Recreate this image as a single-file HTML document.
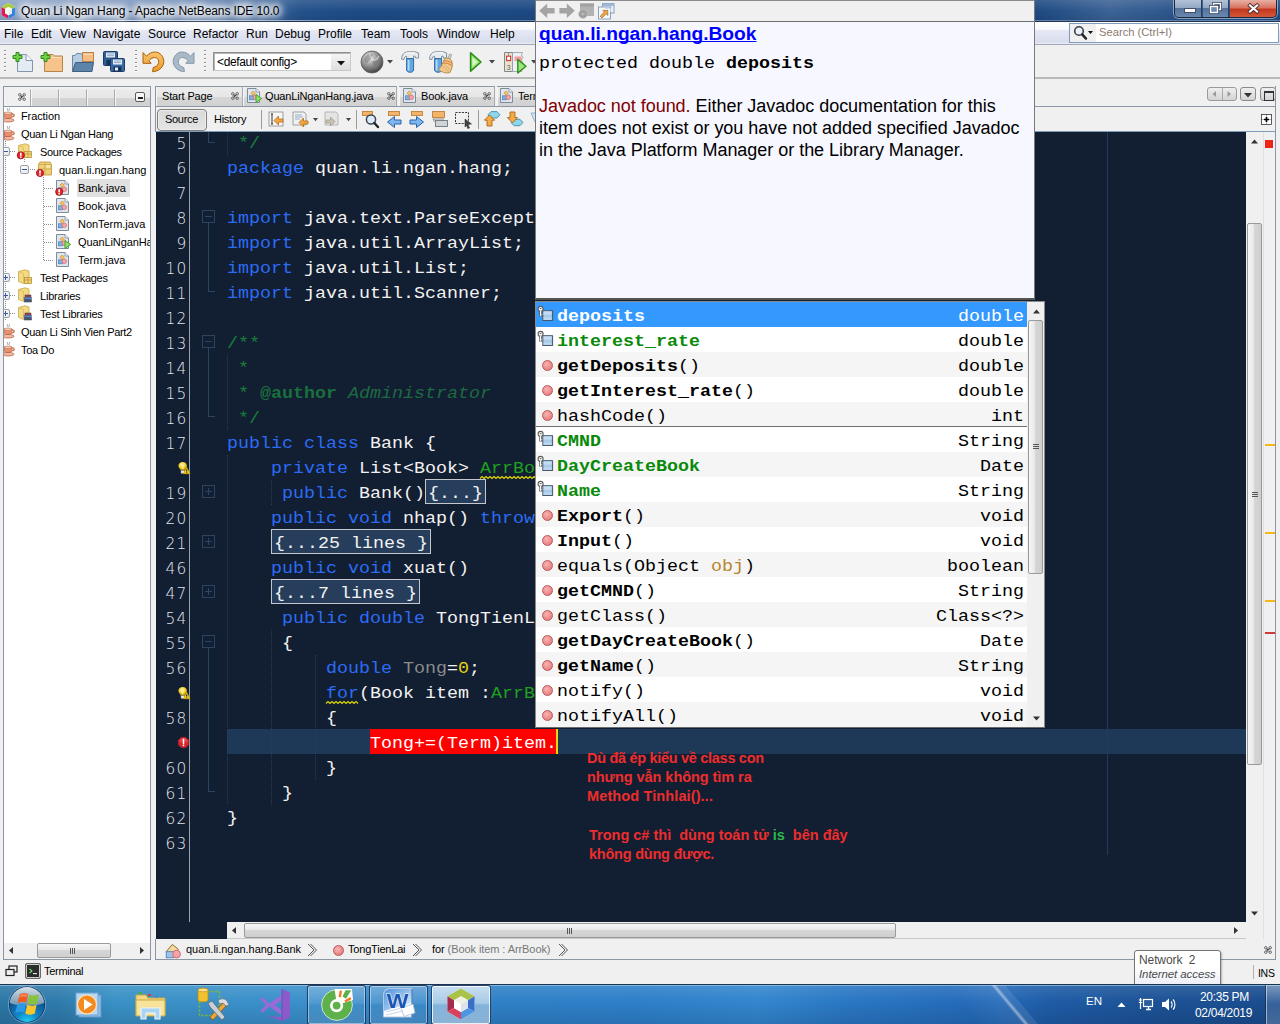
<!DOCTYPE html>
<html lang="vi">
<head>
<meta charset="utf-8">
<title>Quan Li Ngan Hang - Apache NetBeans IDE 10.0</title>
<style>
html,body{margin:0;padding:0;}
body{width:1280px;height:1024px;overflow:hidden;position:relative;background:#f0f0f0;font-family:"Liberation Sans","DejaVu Sans",sans-serif;font-size:11px;color:#000;}
.abs,.abs-all *{position:absolute;}
div,span,svg{box-sizing:border-box;}
svg{position:absolute;overflow:visible;}
.ui{font-size:11px;letter-spacing:-0.3px;white-space:nowrap;}
/* ---------- title bar ---------- */
#titlebar{left:0;top:0;width:1280px;height:22px;background:linear-gradient(90deg,#8da4c7 0px,#8aa2c6 40px,#7591bc 170px,#4e73a6 250px,#24528b 300px,#1e4b85 360px,#1c4882 900px,#1f4b83 1040px,#3c6395 1110px,#2b558c 1180px,#204e87 1280px);}
#titlebar .shade{left:0;top:0;width:1280px;height:22px;background:linear-gradient(180deg,rgba(255,255,255,.12) 0,rgba(255,255,255,0) 50%,rgba(0,0,0,.10) 100%);}
#title{left:21px;top:4px;font-size:12px;letter-spacing:-0.1px;color:#000;white-space:nowrap;text-shadow:0 0 6px #fff,0 0 6px #fff,0 0 8px #fff,0 0 10px #fff,0 0 12px #fff,0 0 12px #fff;}
/* ---------- menu bar ---------- */
#menubar{left:0;top:22px;width:1280px;height:23px;background:linear-gradient(180deg,#ffffff 0,#f8f9fd 30%,#e6e9f4 36%,#d8ddee 90%,#eceef7 100%);border-top:1px solid #fbfcfe;border-bottom:1px solid #a3a8b6;}
#menubar span{position:absolute;top:4px;font-size:12px;white-space:nowrap;}
/* ---------- toolbar ---------- */
#toolbar{left:0;top:45px;width:1280px;height:34px;background:#f0f0f0;border-bottom:2px solid #b9b9b9;}
.dots{width:2px;background-image:linear-gradient(180deg,#8e8e8e 1px,#fff 1px,#fff 2px,transparent 2px);background-size:2px 4px;}
/* ---------- left panel ---------- */
#leftpanel{left:3px;top:86px;width:148px;height:874px;border:1px solid #8b97a5;background:#fff;overflow:hidden;}
#leftpanel .hdr{left:0;top:0;width:146px;height:20px;background:#f0f0f0;border-bottom:1px solid #8b97a5;}
#leftpanel .hdr .t{top:0;height:19px;border-right:1px solid #a4abb5;box-shadow:inset 1px 0 0 #f6f6f6;background:linear-gradient(180deg,#ebebeb 0,#e6e6e6 50%,#d4d4d4 55%,#d0d0d0 100%);}
.tree div{position:absolute;height:18px;line-height:18px;font-size:11px;letter-spacing:-0.3px;white-space:nowrap;}
/* ---------- editor ---------- */
#edtabs{left:155px;top:86px;width:1121px;height:20px;border-left:1px solid #8b97a5;background:#f0f0f0;}
.etab{top:0;height:20px;border-top:1px solid #8b97a5;border-right:1px solid #a4abb5;box-shadow:inset 1px 0 0 #f6f6f6;background:linear-gradient(180deg,#ececec 0,#e7e7e7 50%,#d6d6d6 55%,#d2d2d2 100%);}
.etab span{position:absolute;top:3px;letter-spacing:-0.15px;}
#edtool{left:155px;top:106px;width:1121px;height:26px;background:#f0f0f0;border:1px solid #8b97a5;border-bottom:1px solid #7f9db9;}
#code{left:156px;top:132px;width:1090px;height:790px;background:#121e31;overflow:hidden;}
#code .row{position:absolute;left:71px;height:25px;line-height:25px;white-space:pre;color:#f2f2f2;}
.t{display:inline-block;font-family:"Liberation Mono","DejaVu Sans Mono",monospace;font-size:18.333px;line-height:25px;white-space:pre;transform:scaleY(.86);transform-origin:0 17.6px;}
#code .ln{position:absolute;left:0;width:31.5px;height:25px;text-align:right;color:#e4e7eb;}
#code .ln .t{font-family:"DejaVu Sans Light","DejaVu Sans",sans-serif;font-weight:200;font-size:15.4px;letter-spacing:1.2px;transform:none;}
.k{color:#2c6cf5;}
.c{color:#17803a;}
.c b{color:#1a6f3e;}
.c i{color:#1d6b42;}
.f{color:#1fa01f;}
.fold{position:absolute;border:1px solid #c4c8cc;background:#263e5c;height:25px;padding:0 0 0 2px;color:#f2f2f2;overflow:hidden;}
.fold .t{position:absolute;left:2px;top:1px;}
.ann{font:bold 14.5px/19px 'Liberation Sans','DejaVu Sans',sans-serif;color:#ee2d2d;white-space:pre;}
.fbox{position:absolute;left:46px;width:13px;height:13px;border:1px solid #2b4461;}
.fbox i{position:absolute;left:2px;top:5px;width:7px;height:1px;background:#2b4461;}
.fbox b{position:absolute;left:5px;top:2px;width:1px;height:7px;background:#2b4461;}
.fl{position:absolute;background:#2b4461;}
.ig{position:absolute;width:1px;background-image:linear-gradient(180deg,#2a3d57 1px,transparent 1px);background-size:1px 2px;}
/* ---------- popups ---------- */
#jdoc{left:535px;top:0;width:500px;height:300px;background:#f7f7ff;border-left:1px solid #7a7a7a;border-right:1px solid #7a7a7a;border-bottom:2px solid #555;}
#jdoc .bar{left:0;top:0;width:498px;height:22px;background:#f0f0f0;border-bottom:1px solid #6e6e6e;border-top:1px solid #8a8a8a;}
#cc{left:535px;top:301px;width:510px;height:427px;background:#fff;border:1px solid #8a8a8a;border-bottom-color:#6b6b6b;overflow:hidden;}
#cc .r{position:absolute;left:0;width:491px;height:25px;white-space:pre;color:#000;}
#cc .r.g{background:#f5f5f5;}
#cc .r .n{position:absolute;left:21px;top:2px;}
#cc .r .ty{position:absolute;right:3px;top:2px;}
#cc .r b{font-weight:bold;}
#cc .r .fi{color:#0a8a0a;font-weight:bold;}
.mi{position:absolute;left:6px;top:8px;width:11px;height:11px;border-radius:50%;background:radial-gradient(circle at 40% 35%,#f9b4b4 0,#ee8d8d 55%,#d96a6a 100%);border:1px solid #b85a5a;}
/* ---------- status / taskbar ---------- */
#statusbar{left:0;top:960px;width:1280px;height:24px;background:#f0f0f0;}
#taskbar{left:0;top:984px;width:1280px;height:40px;overflow:hidden;background:linear-gradient(90deg,#2c77a6 0px,#2f7cad 60px,#3a92c6 115px,#3b90cc 300px,#2f81c7 500px,#2e80c9 640px,#3386ce 760px,#2a77c3 850px,#2369b8 1000px,#1f5ca6 1050px,#1c5397 1150px,#1a4d8e 1280px);border-top:1px solid #1d3350;}
#taskbar .sh{left:0;top:0;width:1280px;height:39px;border-top:1px solid rgba(160,215,245,.7);background:linear-gradient(180deg,rgba(255,255,255,.10) 0,rgba(255,255,255,0) 40%,rgba(0,0,20,.12) 100%);}
.tbtn{top:0px;height:40px;width:59px;border:1px solid rgba(16,44,84,.85);border-radius:3px;background:linear-gradient(180deg,rgba(255,255,255,.22) 0,rgba(255,255,255,.12) 45%,rgba(255,255,255,.04) 50%,rgba(255,255,255,.10) 100%);box-shadow:inset 0 0 0 1px rgba(255,255,255,.42);}
.tray{color:#fff;font-size:12px;white-space:nowrap;}
</style>
</head>
<body>
<!-- ===== title bar ===== -->
<div id="titlebar" class="abs"><div class="shade abs"></div>
<div class="abs" style="left:0;top:20px;width:1280px;height:1px;background:linear-gradient(90deg,#e4ecf6 0,#c9d7ea 200px,#7f9dc6 320px,#5f82b2 420px,#5f82b2 1280px);"></div>
<div class="abs" style="left:0;top:21px;width:1280px;height:1px;background:#27364f;"></div>
<svg style="left:1px;top:2px" width="16" height="18" viewBox="0 0 16 18">
<polygon points="7.5,1 14.5,5 14.5,13 7.5,17 0.5,13 0.5,5" fill="#fff"/>
<polygon points="7.5,1 14.5,5 11,7 7.5,5 4,7 0.5,5" fill="#a9cd3c"/>
<polygon points="0.5,5 4,7 4,11.2 7.5,13.2 7.5,17 0.5,13" fill="#e0195a"/>
<polygon points="14.5,5 11,7 11,11.2 7.5,13.2 7.5,17 14.5,13" fill="#2f80d8"/>
<polygon points="7.5,5 11,7 11,11.2 7.5,13.2 4,11.2 4,7" fill="#fafcf6"/>
<polygon points="7.5,9 11,7 11,11.2 7.5,13.2" fill="#e6ebf0"/>
</svg>
<div id="title" class="abs">Quan Li Ngan Hang - Apache NetBeans IDE 10.0</div>
<!-- window buttons -->
<div class="abs" style="left:1174px;top:0;width:103px;height:18px;border:1px solid #1b2a44;border-top:none;border-radius:0 0 5px 5px;box-shadow:0 0 0 1px rgba(255,255,255,.45);overflow:hidden;">
 <div class="abs" style="left:0;top:0;width:27px;height:17px;background:linear-gradient(180deg,#b4c2d6 0,#93a8c4 45%,#56739a 50%,#6a88b0 100%);border-right:1px solid #2a3d5c;"></div>
 <div class="abs" style="left:28px;top:0;width:26px;height:17px;background:linear-gradient(180deg,#b4c2d6 0,#93a8c4 45%,#56739a 50%,#6a88b0 100%);border-right:1px solid #2a3d5c;"></div>
 <div class="abs" style="left:55px;top:0;width:48px;height:18px;background:linear-gradient(180deg,#e8b0a4 0,#d8705c 45%,#c3361e 50%,#d45c3a 100%);"></div>
 <div class="abs" style="left:10px;top:9px;width:10px;height:3px;background:#fff;border:1px solid #44506a;box-sizing:content-box;margin:-1px;"></div>
 <svg style="left:34px;top:2px" width="13" height="12" viewBox="0 0 13 12"><rect x="4.5" y="1.5" width="7" height="6" fill="none" stroke="#3b4760" stroke-width="3"/><rect x="4.5" y="1.5" width="7" height="6" fill="none" stroke="#fff" stroke-width="1.4"/><rect x="1.5" y="4.5" width="7" height="6" fill="#6c8bb6" stroke="#3b4760" stroke-width="3"/><rect x="1.5" y="4.5" width="7" height="6" fill="#6c8bb6" stroke="#fff" stroke-width="1.4"/></svg>
 <svg style="left:73px;top:4px" width="11" height="9" viewBox="0 0 11 9"><path d="M2 1.5 L9 7.5 M9 1.5 L2 7.5" stroke="#4a2a2a" stroke-width="3.8" stroke-linecap="square"/><path d="M2 1.5 L9 7.5 M9 1.5 L2 7.5" stroke="#fff" stroke-width="2.2" stroke-linecap="square"/></svg>
</div>
</div>
<!-- ===== menu bar ===== -->
<div id="menubar" class="abs">
<span style="left:4px">File</span><span style="left:31px">Edit</span><span style="left:60px">View</span><span style="left:93px">Navigate</span><span style="left:148px">Source</span><span style="left:193px">Refactor</span><span style="left:246px">Run</span><span style="left:275px">Debug</span><span style="left:318px">Profile</span><span style="left:361px">Team</span><span style="left:400px">Tools</span><span style="left:437px">Window</span><span style="left:490px">Help</span>
<!-- quick search -->
<div class="abs" style="left:1069px;top:0px;width:210px;height:20px;background:#fff;border:1px solid #7f9db9;">
 <div class="abs" style="left:0;top:0;width:26px;height:18px;background:#f0f0f0;"></div>
 <svg style="left:3px;top:1px" width="22" height="16" viewBox="0 0 22 16"><circle cx="6" cy="6" r="4.3" fill="#e9f1fb" stroke="#3a3f4a" stroke-width="1.6"/><path d="M9.2 9.4 L13 13.6" stroke="#222" stroke-width="2.4" stroke-linecap="round"/><polygon points="15,6 20,6 17.5,9" fill="#111"/></svg>
 <span style="left:29px;top:2px;font-size:11.2px;letter-spacing:0;color:#8a7a72;">Search (Ctrl+I)</span>
</div>
</div>
<!-- ===== toolbar ===== -->
<div id="toolbar" class="abs">
<div class="abs dots" style="left:4px;top:5px;height:22px;"></div>
<!-- new file -->
<svg style="left:12px;top:5px" width="22" height="22" viewBox="0 0 22 22"><path d="M5.5 4.5 H14 L20.5 10.5 V21.5 H5.5 Z" fill="#e3ebf5" stroke="#8795a8"/><path d="M14 4.5 V10.5 H20.5" fill="#f7fafd" stroke="#8795a8"/><path d="M1 5.5 H4 V2.5 H7 V5.5 H10 V8.5 H7 V11.5 H4 V8.5 H1 Z" fill="#6fd143" stroke="#2f8a1c"/></svg>
<!-- new project -->
<svg style="left:40px;top:5px" width="24" height="22" viewBox="0 0 24 22"><path d="M4.5 4.5 H13 L14.5 6 H22.5 V21.5 H4.5 Z" fill="#f6c48b" stroke="#b8834a"/><path d="M5.5 7.5 H21.5" stroke="#fbe0bd"/><path d="M1 5.5 H4 V2.5 H7 V5.5 H10 V8.5 H7 V11.5 H4 V8.5 H1 Z" fill="#6fd143" stroke="#2f8a1c"/></svg>
<!-- open project -->
<svg style="left:71px;top:5px" width="24" height="22" viewBox="0 0 24 22"><path d="M1.5 21 V5.5 H4 L5.5 3.5 H10 L11.5 5.5 H11.5 V21 Z" fill="#b8cde2" stroke="#6d87a3"/><rect x="11.5" y="2.5" width="11" height="9" fill="#f3bd83" stroke="#b8834a"/><path d="M12.5 4.5 H21.5" stroke="#fbdcb6"/><path d="M1.5 21.5 L4.5 12.5 H22.5 L21 21.5 Z" fill="#5e84aa" stroke="#3d5f82"/></svg>
<!-- save all -->
<svg style="left:102px;top:5px" width="24" height="22" viewBox="0 0 24 22"><rect x="1.5" y="1.5" width="14" height="14" rx="1" fill="#2f5c93" stroke="#1b3c66"/><rect x="4" y="2.5" width="9" height="5" fill="#dfe9f4"/><path d="M5 4 H12 M5 5.7 H12" stroke="#7e9bbc" stroke-width=".8"/><rect x="4.5" y="10" width="8" height="5" fill="#16335a"/><rect x="8.5" y="8.5" width="14" height="13" rx="1" fill="#3a6aa3" stroke="#1b3c66"/><rect x="11" y="9.5" width="9" height="5" fill="#e6eef7"/><path d="M12 11 H19 M12 12.6 H19" stroke="#7e9bbc" stroke-width=".8"/><rect x="11.5" y="16.5" width="8" height="5" fill="#16335a"/><rect x="13" y="17.5" width="3" height="3" fill="#e6eef7"/></svg>
<div class="abs dots" style="left:135px;top:5px;height:22px;"></div>
<!-- undo -->
<svg style="left:141px;top:4px" width="24" height="24" viewBox="0 0 24 24"><defs><linearGradient id="ug" x1="0" y1="0" x2="0" y2="1"><stop offset="0" stop-color="#fbc36a"/><stop offset="1" stop-color="#ee9a2a"/></linearGradient></defs><path d="M2 3.6 L2 14.3 L10.2 14.3 L7.9 11.8 C10 8.8 14 7.4 16.4 9.6 C19.2 12.4 17.4 17.4 12.2 18.5 L11.6 22.7 C17 22.5 22 19 22.8 13.4 C23.3 7.6 18.6 3 14.4 3 C10.8 3 8 4.4 5.6 7.2 Z" fill="url(#ug)" stroke="#a8600e" stroke-width="1" stroke-linejoin="round"/></svg>
<!-- redo -->
<svg style="left:172px;top:4px" width="24" height="24" viewBox="0 0 24 24"><path d="M 22.0 3.6 L 22.0 14.3 L 13.8 14.3 L 16.1 11.8 C 14.0 8.8 10.0 7.4 7.6 9.6 C 4.8 12.4 6.6 17.4 11.8 18.5 L 12.4 22.7 C 7.0 22.5 2.0 19 1.2 13.4 C 0.7 7.6 5.4 3 9.6 3 C 13.2 3 16.0 4.4 18.4 7.2 Z" fill="#a9b9c8" stroke="#8597a9" stroke-width="1" stroke-linejoin="round"/></svg>
<div class="abs dots" style="left:204px;top:5px;height:22px;"></div>
<!-- config combo -->
<div class="abs" style="left:213px;top:7px;width:138px;height:19px;border:1px solid #8e8f8f;border-right-color:#c8c8c8;border-bottom-color:#c8c8c8;background:#fff;box-shadow:inset 1px 1px 0 #b5b5b5;">
 <span class="abs ui" style="left:3px;top:2px;font-size:12px;letter-spacing:-0.35px;">&lt;default config&gt;</span>
 <div class="abs" style="left:117px;top:1px;width:19px;height:16px;background:linear-gradient(180deg,#f4f4f4,#dedede);"></div>
 <svg style="left:123px;top:8px" width="9" height="5" viewBox="0 0 9 5"><polygon points="0,0 8,0 4,4.5" fill="#111"/></svg>
</div>
<!-- globe -->
<svg style="left:360px;top:5px" width="24" height="24" viewBox="0 0 24 24"><defs><radialGradient id="gl" cx="38%" cy="30%" r="75%"><stop offset="0" stop-color="#f4f4f4"/><stop offset=".4" stop-color="#a4a4a4"/><stop offset="1" stop-color="#3c3c3c"/></radialGradient></defs><circle cx="12" cy="12" r="11" fill="url(#gl)" stroke="#5a5a5a" stroke-width=".8"/><path d="M4 9 C6 4 11 3 13 5 C11 7 12 9 10 10 C8 11 8 13 6 13 C4.6 12 4 10.5 4 9 Z M13 11 C15 9 18 9 20 11 C20 15 18 18 15 19 C14 16 12 14 13 11 Z" fill="#7a7a7a" opacity=".6"/><path d="M9 4 C12 6 10 9 13 10 C16 11 18 8 19 6" fill="none" stroke="#fff" stroke-width="1.2" opacity=".55"/></svg>
<svg style="left:387px;top:15px" width="7" height="4" viewBox="0 0 7 4"><polygon points="0,0 6,0 3,3.5" fill="#444"/></svg>
<!-- hammer -->
<svg style="left:399px;top:5px" width="22" height="24" viewBox="0 0 22 24"><path d="M2.6 9.2 C2.6 5 5 2 9 1.8 L16.4 1.8 L19.6 3 L19.6 8 L16.6 8 L16 6.2 L14.6 6.2 L14.6 8.8 H7.6 V6.4 C6.2 6 5.2 7.2 4.8 9.6 Z" fill="#e6ebf0" stroke="#76838f" stroke-width=".9" stroke-linejoin="round"/><path d="M5 5 C6 3.4 8 2.8 10 2.8 H16" stroke="#fff" stroke-width="1" fill="none"/><path d="M7.6 8.6 H14.6 V20 C14.6 23 7.6 23 7.6 20 Z" fill="#62a6e2" stroke="#2f6aa5"/><path d="M9.6 10 V20.5" stroke="#b4d8f7" stroke-width="1.8"/></svg>
<!-- clean & build -->
<svg style="left:427px;top:5px" width="28" height="25" viewBox="0 0 28 25"><path d="M2.6 9.2 C2.6 5 5 2 9 1.8 L16.4 1.8 L19.6 3 L19.6 8 L16.6 8 L16 6.2 L14.6 6.2 L14.6 8.8 H7.6 V6.4 C6.2 6 5.2 7.2 4.8 9.6 Z" fill="#e6ebf0" stroke="#76838f" stroke-width=".9" stroke-linejoin="round"/><path d="M5 5 C6 3.4 8 2.8 10 2.8 H16" stroke="#fff" stroke-width="1" fill="none"/><path d="M7.6 8.6 H14.6 V20 C14.6 23 7.6 23 7.6 20 Z" fill="#62a6e2" stroke="#2f6aa5"/><path d="M9.6 10 V20.5" stroke="#b4d8f7" stroke-width="1.8"/><path d="M22.5 4 L24.6 4.8 L22.6 10.5 L20.6 9.8 Z" fill="#d9d9d9" stroke="#8a8a8a" stroke-width=".7"/><path d="M17.5 8.5 C20 7.5 23.5 8.6 24.8 11 C26 15 25 19 23 22.5 C20 23.6 15 22.6 11.5 19.5 C14.5 16.5 16.2 12.5 17.5 8.5 Z" fill="#efc88a" stroke="#b08648" stroke-width=".9"/><path d="M16.8 11 C19.5 10.4 22.5 11.4 25 13.4 M16 13.2 C19 12.6 22.4 13.8 25.2 15.8" stroke="#d97a3a" stroke-width="1" fill="none"/><path d="M15 16 L22 21.8 M17.5 15 L23.8 20" stroke="#cfa262" stroke-width=".7"/></svg>
<!-- run -->
<svg style="left:467px;top:6px" width="17" height="22" viewBox="0 0 17 22"><path d="M3.6 1.8 L14 11 L3.6 20.2 Z" fill="#9be67a" stroke="#2b8f1a" stroke-width="1.6" stroke-linejoin="round"/><path d="M5.4 6.4 L10.8 11 L5.4 15.6 Z" fill="#d4f7c4"/></svg>
<svg style="left:489px;top:15px" width="7" height="4" viewBox="0 0 7 4"><polygon points="0,0 6,0 3,3.5" fill="#444"/></svg>
<!-- debug -->
<svg style="left:504px;top:5px" width="26" height="25" viewBox="0 0 26 25"><path d="M0.5 2.5 H8.5 V21.5 H0.5 Z" fill="#ebe3c6" stroke="#7d8896"/><path d="M8.5 2.5 H18.5 L17.4 5 L18.8 7.4 L17.4 10 L18.6 12.6 L17.4 15 L18.5 17.4 L17.6 21.5 H8.5 Z" fill="#eef0f3" stroke="#8e99a6" stroke-width=".8"/><rect x="10.5" y="6.5" width="7" height="4.6" fill="#f79a9a"/><path d="M4.5 3 V6" stroke="#7d8896" stroke-width=".8"/><rect x="2.6" y="6.2" width="4" height="4.4" fill="#fff" stroke="#cf3a3a" stroke-width="1.1"/><text x="2.4" y="19.6" font-family="Liberation Sans,sans-serif" font-size="7.5" fill="#5a6a8a">3</text><path d="M13.8 9.4 L22 16.2 L13.8 23 Z" fill="#9be67a" stroke="#2b8f1a" stroke-width="1.4" stroke-linejoin="round"/></svg>
<svg style="left:531px;top:15px" width="7" height="4" viewBox="0 0 7 4"><polygon points="0,0 6,0 3,3.5" fill="#444"/></svg>
</div>
<!-- ===== left panel (Projects) ===== -->
<div id="leftpanel" class="abs">
<div class="hdr abs">
<div class="t abs" style="left:0;width:27px;background:#f0f0f0;"></div>
<div class="t abs" style="left:27px;width:28px;"></div>
<div class="t abs" style="left:55px;width:28px;"></div>
<div class="t abs" style="left:83px;width:28px;"></div>
<div class="t abs" style="left:111px;width:35px;border-right:none;"></div>
<svg style="left:14px;top:6px" width="8" height="8" viewBox="0 0 8 8"><path d="M2.6 2.6 L5.4 5.4 M5.4 2.6 L2.6 5.4" stroke="#444" stroke-width="1.1"/><circle cx="1.8" cy="1.8" r="1.25" fill="none" stroke="#444" stroke-width=".8"/><circle cx="6.2" cy="1.8" r="1.25" fill="none" stroke="#444" stroke-width=".8"/><circle cx="1.8" cy="6.2" r="1.25" fill="none" stroke="#444" stroke-width=".8"/><circle cx="6.2" cy="6.2" r="1.25" fill="none" stroke="#444" stroke-width=".8"/></svg>
<div class="abs" style="left:131px;top:5px;width:10px;height:10px;border:1px solid #5a5a5a;border-radius:2px;background:#f6f6f6;"><i class="abs" style="left:2px;top:4px;width:5px;height:2px;background:#222"></i></div>
</div>
<div class="tree abs" style="left:0;top:0;">
<div style="left:17px;top:20px;letter-spacing:-0.1px;">Fraction</div>
<div style="left:17px;top:38px;letter-spacing:-0.3px;">Quan Li Ngan Hang</div>
<div style="left:36px;top:56px;letter-spacing:-0.3px;">Source Packages</div>
<div style="left:55px;top:74px;letter-spacing:0px;">quan.li.ngan.hang</div>
<div style="left:73px;top:92px;width:53px;background:#e1e1e1;"></div>
<div style="left:74px;top:92px;letter-spacing:-0.05px;">Bank.java</div>
<div style="left:74px;top:110px;letter-spacing:-0.05px;">Book.java</div>
<div style="left:74px;top:128px;letter-spacing:-0.05px;">NonTerm.java</div>
<div style="left:74px;top:146px;letter-spacing:-0.1px;">QuanLiNganHa</div>
<div style="left:74px;top:164px;letter-spacing:-0.05px;">Term.java</div>
<div style="left:36px;top:182px;letter-spacing:-0.3px;">Test Packages</div>
<div style="left:36px;top:200px;letter-spacing:-0.2px;">Libraries</div>
<div style="left:36px;top:218px;letter-spacing:-0.2px;">Test Libraries</div>
<div style="left:17px;top:236px;letter-spacing:-0.3px;">Quan Li Sinh Vien Part2</div>
<div style="left:17px;top:254px;letter-spacing:-0.3px;">Toa Do</div>
</div>
<svg style="left:-2px;top:21px" width="14" height="16" viewBox="0 0 14 16"><path d="M5 0 L6 3 M7.5 0 L7 3" stroke="#8a8a8a" stroke-width=".7"/><path d="M2 5 H10 C10 9 9 11 6 11 C3 11 2 9 2 5 Z" fill="#e8926f" stroke="#b2583a" stroke-width=".8"/><path d="M10 6 C13 5.5 13 9 9.6 9" fill="none" stroke="#c8694a" stroke-width="1.2"/><ellipse cx="6" cy="5.2" rx="4" ry="1.2" fill="#f7d2c0" stroke="#b2583a" stroke-width=".5"/><ellipse cx="6" cy="12.2" rx="6" ry="1.8" fill="#f0b9a2" stroke="#b2583a" stroke-width=".7"/></svg>
<svg style="left:-2px;top:39px" width="14" height="16" viewBox="0 0 14 16"><path d="M5 0 L6 3 M7.5 0 L7 3" stroke="#8a8a8a" stroke-width=".7"/><path d="M2 5 H10 C10 9 9 11 6 11 C3 11 2 9 2 5 Z" fill="#e8926f" stroke="#b2583a" stroke-width=".8"/><path d="M10 6 C13 5.5 13 9 9.6 9" fill="none" stroke="#c8694a" stroke-width="1.2"/><ellipse cx="6" cy="5.2" rx="4" ry="1.2" fill="#f7d2c0" stroke="#b2583a" stroke-width=".5"/><ellipse cx="6" cy="12.2" rx="6" ry="1.8" fill="#f0b9a2" stroke="#b2583a" stroke-width=".7"/><rect x=0 y=7 width=2.5 height=6 fill=#e2262b /></svg>
<svg style="left:-2px;top:237px" width="14" height="16" viewBox="0 0 14 16"><path d="M5 0 L6 3 M7.5 0 L7 3" stroke="#8a8a8a" stroke-width=".7"/><path d="M2 5 H10 C10 9 9 11 6 11 C3 11 2 9 2 5 Z" fill="#e8926f" stroke="#b2583a" stroke-width=".8"/><path d="M10 6 C13 5.5 13 9 9.6 9" fill="none" stroke="#c8694a" stroke-width="1.2"/><ellipse cx="6" cy="5.2" rx="4" ry="1.2" fill="#f7d2c0" stroke="#b2583a" stroke-width=".5"/><ellipse cx="6" cy="12.2" rx="6" ry="1.8" fill="#f0b9a2" stroke="#b2583a" stroke-width=".7"/></svg>
<svg style="left:-2px;top:255px" width="14" height="16" viewBox="0 0 14 16"><path d="M5 0 L6 3 M7.5 0 L7 3" stroke="#8a8a8a" stroke-width=".7"/><path d="M2 5 H10 C10 9 9 11 6 11 C3 11 2 9 2 5 Z" fill="#e8926f" stroke="#b2583a" stroke-width=".8"/><path d="M10 6 C13 5.5 13 9 9.6 9" fill="none" stroke="#c8694a" stroke-width="1.2"/><ellipse cx="6" cy="5.2" rx="4" ry="1.2" fill="#f7d2c0" stroke="#b2583a" stroke-width=".5"/><ellipse cx="6" cy="12.2" rx="6" ry="1.8" fill="#f0b9a2" stroke="#b2583a" stroke-width=".7"/></svg>
<svg style="left:13px;top:56px" width="17" height="17" viewBox="0 0 17 17"><path d="M1.5 2.5 L8 0.8 L12 2 V11.5 L6.5 14.5 L1.5 12.5 Z" fill="#f3d982" stroke="#c9a84b" stroke-width=".8"/><path d="M1.5 2.5 L6.5 4.5 V14.5" fill="none" stroke="#d8ba5e" stroke-width=".8"/><rect x="7.5" y="8.5" width="7" height="6" fill="#f0d174" stroke="#b7943a" stroke-width=".8"/><path d="M7.5 11 H14.5 M11 8.5 V14.5" stroke="#b7943a" stroke-width=".7"/><circle cx="3.8" cy="12.3" r="3.6" fill="#e2262b" stroke="#9c1216" stroke-width=".8"/><rect x="3.0" y="9.700000000000001" width="1.6" height="3.2" fill="#fff"/><rect x="3.0" y="13.5" width="1.6" height="1.4" fill="#fff"/></svg>
<svg style="left:32px;top:74px" width="17" height="17" viewBox="0 0 17 17"><path d="M2.5 3.5 L4 1 H14 L15.5 3.5 V14 H2.5 Z" fill="#f0cf78" stroke="#b7943a" stroke-width=".8"/><path d="M2.5 3.5 H15.5 M9 1 V14 M2.5 8 H15.5" stroke="#c9a84b" stroke-width=".8"/><rect x="10.5" y="4.5" width="3" height="2" fill="#faf0cc"/><circle cx="4" cy="12" r="3.6" fill="#e2262b" stroke="#9c1216" stroke-width=".8"/><rect x="3.2" y="9.4" width="1.6" height="3.2" fill="#fff"/><rect x="3.2" y="13.2" width="1.6" height="1.4" fill="#fff"/></svg>
<svg style="left:52px;top:93px" width="15" height="16" viewBox="0 0 15 16"><path d="M0.5 0.5 H9 L12.5 4 V14.5 H0.5 Z" fill="#dfe6ee" stroke="#7f8b99"/><path d="M9 0.5 V4 H12.5" fill="#f4f7fa" stroke="#7f8b99" stroke-width=".8"/><rect x="2.6" y="7.8" width="4" height="4" fill="#7fb0e0" stroke="#4a7fb5" stroke-width=".7"/><circle cx="8.3" cy="9.3" r="2.3" fill="#f4a3a6" stroke="#cf6b70" stroke-width=".7"/><path d="M6.2 3 L8.4 5.2 L6.2 7.4 L4 5.2 Z" fill="#f5c46a" stroke="#c98a2b" stroke-width=".7"/><circle cx="3.2" cy="11.8" r="3.6" fill="#e2262b" stroke="#9c1216" stroke-width=".8"/><rect x="2.4000000000000004" y="9.200000000000001" width="1.6" height="3.2" fill="#fff"/><rect x="2.4000000000000004" y="13.0" width="1.6" height="1.4" fill="#fff"/></svg>
<svg style="left:52px;top:111px" width="15" height="16" viewBox="0 0 15 16"><path d="M0.5 0.5 H9 L12.5 4 V14.5 H0.5 Z" fill="#dfe6ee" stroke="#7f8b99"/><path d="M9 0.5 V4 H12.5" fill="#f4f7fa" stroke="#7f8b99" stroke-width=".8"/><rect x="2.6" y="7.8" width="4" height="4" fill="#7fb0e0" stroke="#4a7fb5" stroke-width=".7"/><circle cx="8.3" cy="9.3" r="2.3" fill="#f4a3a6" stroke="#cf6b70" stroke-width=".7"/><path d="M6.2 3 L8.4 5.2 L6.2 7.4 L4 5.2 Z" fill="#f5c46a" stroke="#c98a2b" stroke-width=".7"/></svg>
<svg style="left:52px;top:129px" width="15" height="16" viewBox="0 0 15 16"><path d="M0.5 0.5 H9 L12.5 4 V14.5 H0.5 Z" fill="#dfe6ee" stroke="#7f8b99"/><path d="M9 0.5 V4 H12.5" fill="#f4f7fa" stroke="#7f8b99" stroke-width=".8"/><rect x="2.6" y="7.8" width="4" height="4" fill="#7fb0e0" stroke="#4a7fb5" stroke-width=".7"/><circle cx="8.3" cy="9.3" r="2.3" fill="#f4a3a6" stroke="#cf6b70" stroke-width=".7"/><path d="M6.2 3 L8.4 5.2 L6.2 7.4 L4 5.2 Z" fill="#f5c46a" stroke="#c98a2b" stroke-width=".7"/></svg>
<svg style="left:52px;top:147px" width="15" height="16" viewBox="0 0 15 16"><path d="M0.5 0.5 H9 L12.5 4 V14.5 H0.5 Z" fill="#dfe6ee" stroke="#7f8b99"/><path d="M9 0.5 V4 H12.5" fill="#f4f7fa" stroke="#7f8b99" stroke-width=".8"/><rect x="2.6" y="7.8" width="4" height="4" fill="#7fb0e0" stroke="#4a7fb5" stroke-width=".7"/><circle cx="8.3" cy="9.3" r="2.3" fill="#f4a3a6" stroke="#cf6b70" stroke-width=".7"/><path d="M6.2 3 L8.4 5.2 L6.2 7.4 L4 5.2 Z" fill="#f5c46a" stroke="#c98a2b" stroke-width=".7"/><path d="M9 6.5 L14.6 10.5 L9 14.5 Z" fill="#8fe36a" stroke="#3a9a22" stroke-width=".9" stroke-linejoin="round"/></svg>
<svg style="left:52px;top:165px" width="15" height="16" viewBox="0 0 15 16"><path d="M0.5 0.5 H9 L12.5 4 V14.5 H0.5 Z" fill="#dfe6ee" stroke="#7f8b99"/><path d="M9 0.5 V4 H12.5" fill="#f4f7fa" stroke="#7f8b99" stroke-width=".8"/><rect x="2.6" y="7.8" width="4" height="4" fill="#7fb0e0" stroke="#4a7fb5" stroke-width=".7"/><circle cx="8.3" cy="9.3" r="2.3" fill="#f4a3a6" stroke="#cf6b70" stroke-width=".7"/><path d="M6.2 3 L8.4 5.2 L6.2 7.4 L4 5.2 Z" fill="#f5c46a" stroke="#c98a2b" stroke-width=".7"/></svg>
<svg style="left:13px;top:182px" width="17" height="17" viewBox="0 0 17 17"><path d="M1.5 2.5 L8 0.8 L12 2 V11.5 L6.5 14.5 L1.5 12.5 Z" fill="#f3d982" stroke="#c9a84b" stroke-width=".8"/><path d="M1.5 2.5 L6.5 4.5 V14.5" fill="none" stroke="#d8ba5e" stroke-width=".8"/><rect x="7.5" y="8.5" width="7" height="6" fill="#f0d174" stroke="#b7943a" stroke-width=".8"/><path d="M7.5 11 H14.5 M11 8.5 V14.5" stroke="#b7943a" stroke-width=".7"/></svg>
<svg style="left:13px;top:200px" width="17" height="17" viewBox="0 0 17 17"><path d="M1.5 2.5 L8 0.8 L12 2 V11.5 L6.5 14.5 L1.5 12.5 Z" fill="#f3d982" stroke="#c9a84b" stroke-width=".8"/><path d="M1.5 2.5 L6.5 4.5 V14.5" fill="none" stroke="#d8ba5e" stroke-width=".8"/><rect x="8" y="8" width="6" height="2.2" fill="#8a4a57" stroke="#5a2a35" stroke-width=".5"/><rect x="7" y="10.4" width="7.5" height="2.2" fill="#5f86c4" stroke="#34568f" stroke-width=".5"/><rect x="7.5" y="12.8" width="7" height="2.2" fill="#4a5a7a" stroke="#2a3450" stroke-width=".5"/></svg>
<svg style="left:13px;top:218px" width="17" height="17" viewBox="0 0 17 17"><path d="M1.5 2.5 L8 0.8 L12 2 V11.5 L6.5 14.5 L1.5 12.5 Z" fill="#f3d982" stroke="#c9a84b" stroke-width=".8"/><path d="M1.5 2.5 L6.5 4.5 V14.5" fill="none" stroke="#d8ba5e" stroke-width=".8"/><rect x="8" y="8" width="6" height="2.2" fill="#8a4a57" stroke="#5a2a35" stroke-width=".5"/><rect x="7" y="10.4" width="7.5" height="2.2" fill="#5f86c4" stroke="#34568f" stroke-width=".5"/><rect x="7.5" y="12.8" width="7" height="2.2" fill="#4a5a7a" stroke="#2a3450" stroke-width=".5"/></svg>
<div class="abs" style="left:1px;top:54px;width:1px;height:180px;background-image:linear-gradient(180deg,#8a8a8a 1px,transparent 1px);background-size:1px 2px;"></div>
<div class="abs" style="left:-3px;top:60px;width:9px;height:9px;border:1px solid #9aa0a8;border-radius:2px;background:linear-gradient(135deg,#fff,#e4e6ea);"><i class="abs" style="left:1px;top:3px;width:5px;height:1px;background:#3a55a5"></i></div>
<div class="abs" style="left:6px;top:64px;width:6px;height:1px;background-image:linear-gradient(90deg,#8a8a8a 1px,transparent 1px);background-size:2px 1px;"></div>
<div class="abs" style="left:20px;top:72px;width:1px;height:4px;background-image:linear-gradient(180deg,#8a8a8a 1px,transparent 1px);background-size:1px 2px;"></div>
<div class="abs" style="left:16px;top:78px;width:9px;height:9px;border:1px solid #9aa0a8;border-radius:2px;background:linear-gradient(135deg,#fff,#e4e6ea);"><i class="abs" style="left:1px;top:3px;width:5px;height:1px;background:#3a55a5"></i></div>
<div class="abs" style="left:26px;top:82px;width:6px;height:1px;background-image:linear-gradient(90deg,#8a8a8a 1px,transparent 1px);background-size:2px 1px;"></div>
<div class="abs" style="left:39px;top:90px;width:1px;height:84px;background-image:linear-gradient(180deg,#8a8a8a 1px,transparent 1px);background-size:1px 2px;"></div>
<div class="abs" style="left:40px;top:101px;width:9px;height:1px;background-image:linear-gradient(90deg,#8a8a8a 1px,transparent 1px);background-size:2px 1px;"></div>
<div class="abs" style="left:40px;top:119px;width:9px;height:1px;background-image:linear-gradient(90deg,#8a8a8a 1px,transparent 1px);background-size:2px 1px;"></div>
<div class="abs" style="left:40px;top:137px;width:9px;height:1px;background-image:linear-gradient(90deg,#8a8a8a 1px,transparent 1px);background-size:2px 1px;"></div>
<div class="abs" style="left:40px;top:155px;width:9px;height:1px;background-image:linear-gradient(90deg,#8a8a8a 1px,transparent 1px);background-size:2px 1px;"></div>
<div class="abs" style="left:40px;top:173px;width:9px;height:1px;background-image:linear-gradient(90deg,#8a8a8a 1px,transparent 1px);background-size:2px 1px;"></div>
<div class="abs" style="left:-3px;top:186px;width:9px;height:9px;border:1px solid #9aa0a8;border-radius:2px;background:linear-gradient(135deg,#fff,#e4e6ea);"><i class="abs" style="left:1px;top:3px;width:5px;height:1px;background:#3a55a5"></i><i class=abs style=left:3px;top:1px;width:1px;height:5px;background:#3a55a5></i></div>
<div class="abs" style="left:6px;top:190px;width:6px;height:1px;background-image:linear-gradient(90deg,#8a8a8a 1px,transparent 1px);background-size:2px 1px;"></div>
<div class="abs" style="left:-3px;top:204px;width:9px;height:9px;border:1px solid #9aa0a8;border-radius:2px;background:linear-gradient(135deg,#fff,#e4e6ea);"><i class="abs" style="left:1px;top:3px;width:5px;height:1px;background:#3a55a5"></i><i class=abs style=left:3px;top:1px;width:1px;height:5px;background:#3a55a5></i></div>
<div class="abs" style="left:6px;top:208px;width:6px;height:1px;background-image:linear-gradient(90deg,#8a8a8a 1px,transparent 1px);background-size:2px 1px;"></div>
<div class="abs" style="left:-3px;top:222px;width:9px;height:9px;border:1px solid #9aa0a8;border-radius:2px;background:linear-gradient(135deg,#fff,#e4e6ea);"><i class="abs" style="left:1px;top:3px;width:5px;height:1px;background:#3a55a5"></i><i class=abs style=left:3px;top:1px;width:1px;height:5px;background:#3a55a5></i></div>
<div class="abs" style="left:6px;top:226px;width:6px;height:1px;background-image:linear-gradient(90deg,#8a8a8a 1px,transparent 1px);background-size:2px 1px;"></div>
<div class="abs" style="left:0;top:856px;width:146px;height:16px;background:#f0f0f0;">
<svg style="left:5px;top:4px" width="5" height="8" viewBox="0 0 5 8"><polygon points="4,0 4,7 0,3.5" fill="#333"/></svg>
<svg style="left:136px;top:4px" width="5" height="8" viewBox="0 0 5 8"><polygon points="0,0 0,7 4,3.5" fill="#333"/></svg>
<div class="abs" style="left:33px;top:0px;width:74px;height:15px;border:1px solid #9a9a9a;border-radius:2px;background:linear-gradient(180deg,#f6f6f6 0,#e8e8e8 45%,#d6d6d6 50%,#cfcfcf 100%);"><i class="abs" style="left:32px;top:4px;width:1px;height:6px;background:#555"></i><i class="abs" style="left:34px;top:4px;width:1px;height:6px;background:#555"></i><i class="abs" style="left:36px;top:4px;width:1px;height:6px;background:#555"></i></div>
</div>
</div>
<!-- ===== editor tabs ===== -->
<div id="edtabs" class="abs">
<div class="etab abs ui" style="left:0;width:87px;"><span style="left:6px;">Start Page</span></div>
<svg style="left:75px;top:6px" width="8" height="8" viewBox="0 0 8 8"><path d="M2.6 2.6 L5.4 5.4 M5.4 2.6 L2.6 5.4" stroke="#444" stroke-width="1.1"/><circle cx="1.8" cy="1.8" r="1.25" fill="none" stroke="#444" stroke-width=".8"/><circle cx="6.2" cy="1.8" r="1.25" fill="none" stroke="#444" stroke-width=".8"/><circle cx="1.8" cy="6.2" r="1.25" fill="none" stroke="#444" stroke-width=".8"/><circle cx="6.2" cy="6.2" r="1.25" fill="none" stroke="#444" stroke-width=".8"/></svg>
<div class="etab abs ui" style="left:87px;width:154px;"><span style="left:22px;">QuanLiNganHang.java</span></div>
<svg style="left:91px;top:2px" width="15" height="16" viewBox="0 0 15 16"><path d="M0.5 0.5 H9 L12.5 4 V14.5 H0.5 Z" fill="#dfe6ee" stroke="#7f8b99"/><path d="M9 0.5 V4 H12.5" fill="#f4f7fa" stroke="#7f8b99" stroke-width=".8"/><rect x="2.6" y="7.8" width="4" height="4" fill="#7fb0e0" stroke="#4a7fb5" stroke-width=".7"/><circle cx="8.3" cy="9.3" r="2.3" fill="#f4a3a6" stroke="#cf6b70" stroke-width=".7"/><path d="M6.2 3 L8.4 5.2 L6.2 7.4 L4 5.2 Z" fill="#f5c46a" stroke="#c98a2b" stroke-width=".7"/><path d="M9 6.5 L14.6 10.5 L9 14.5 Z" fill="#8fe36a" stroke="#3a9a22" stroke-width=".9" stroke-linejoin="round"/></svg>
<svg style="left:231px;top:6px" width="8" height="8" viewBox="0 0 8 8"><path d="M2.6 2.6 L5.4 5.4 M5.4 2.6 L2.6 5.4" stroke="#444" stroke-width="1.1"/><circle cx="1.8" cy="1.8" r="1.25" fill="none" stroke="#444" stroke-width=".8"/><circle cx="6.2" cy="1.8" r="1.25" fill="none" stroke="#444" stroke-width=".8"/><circle cx="1.8" cy="6.2" r="1.25" fill="none" stroke="#444" stroke-width=".8"/><circle cx="6.2" cy="6.2" r="1.25" fill="none" stroke="#444" stroke-width=".8"/></svg>
<div class="etab abs ui" style="left:243px;width:96px;"><span style="left:22px;">Book.java</span></div>
<svg style="left:247px;top:2px" width="15" height="16" viewBox="0 0 15 16"><path d="M0.5 0.5 H9 L12.5 4 V14.5 H0.5 Z" fill="#dfe6ee" stroke="#7f8b99"/><path d="M9 0.5 V4 H12.5" fill="#f4f7fa" stroke="#7f8b99" stroke-width=".8"/><rect x="2.6" y="7.8" width="4" height="4" fill="#7fb0e0" stroke="#4a7fb5" stroke-width=".7"/><circle cx="8.3" cy="9.3" r="2.3" fill="#f4a3a6" stroke="#cf6b70" stroke-width=".7"/><path d="M6.2 3 L8.4 5.2 L6.2 7.4 L4 5.2 Z" fill="#f5c46a" stroke="#c98a2b" stroke-width=".7"/></svg>
<svg style="left:327px;top:6px" width="8" height="8" viewBox="0 0 8 8"><path d="M2.6 2.6 L5.4 5.4 M5.4 2.6 L2.6 5.4" stroke="#444" stroke-width="1.1"/><circle cx="1.8" cy="1.8" r="1.25" fill="none" stroke="#444" stroke-width=".8"/><circle cx="6.2" cy="1.8" r="1.25" fill="none" stroke="#444" stroke-width=".8"/><circle cx="1.8" cy="6.2" r="1.25" fill="none" stroke="#444" stroke-width=".8"/><circle cx="6.2" cy="6.2" r="1.25" fill="none" stroke="#444" stroke-width=".8"/></svg>
<div class="etab abs ui" style="left:341px;width:96px;"><span style="left:21px;">Term.java</span></div>
<svg style="left:344px;top:2px" width="15" height="16" viewBox="0 0 15 16"><path d="M0.5 0.5 H9 L12.5 4 V14.5 H0.5 Z" fill="#dfe6ee" stroke="#7f8b99"/><path d="M9 0.5 V4 H12.5" fill="#f4f7fa" stroke="#7f8b99" stroke-width=".8"/><rect x="2.6" y="7.8" width="4" height="4" fill="#7fb0e0" stroke="#4a7fb5" stroke-width=".7"/><circle cx="8.3" cy="9.3" r="2.3" fill="#f4a3a6" stroke="#cf6b70" stroke-width=".7"/><path d="M6.2 3 L8.4 5.2 L6.2 7.4 L4 5.2 Z" fill="#f5c46a" stroke="#c98a2b" stroke-width=".7"/></svg>
<div class="abs" style="left:1051px;top:1px;width:30px;height:14px;border:1px solid #9a9a9a;border-radius:3px;background:linear-gradient(180deg,#eee,#d4d4d4);"><i class="abs" style="left:14px;top:0;width:1px;height:12px;background:#aaa"></i><svg style="left:4px;top:3px" width="5" height="7" viewBox="0 0 5 7"><polygon points="4,0 4,6 0.5,3" fill="#9a9a9a"/></svg><svg style="left:19px;top:3px" width="5" height="7" viewBox="0 0 5 7"><polygon points="0.5,0 0.5,6 4,3" fill="#9a9a9a"/></svg></div>
<div class="abs" style="left:1084px;top:1px;width:16px;height:14px;border:1px solid #8a8a8a;border-radius:3px;background:linear-gradient(180deg,#eee,#d4d4d4);"><svg style="left:3px;top:5px" width="8" height="5" viewBox="0 0 8 5"><polygon points="0,0 8,0 4,4.5" fill="#333"/></svg></div>
<div class="abs" style="left:1104px;top:1px;width:16px;height:14px;border:1px solid #8a8a8a;border-radius:3px;background:linear-gradient(180deg,#eee,#d4d4d4);"><i class="abs" style="left:3px;top:3px;width:8px;height:7px;border:1px solid #333;border-top:2px solid #333;"></i></div>
</div>
<!-- ===== editor toolbar ===== -->
<div id="edtool" class="abs">
<div class="abs ui" style="left:1px;top:2px;width:50px;height:22px;border:1px solid #7d7d7d;border-radius:4px;background:linear-gradient(180deg,#d9d9d9,#e4e4e4);box-shadow:inset 0 0 0 1px #efefef;"><span class="abs" style="left:7px;top:3px;">Source</span></div>
<span class="abs ui" style="left:58px;top:6px;">History</span>
<i class="abs" style="left:105px;top:3px;width:1px;height:19px;background:#9a9a9a"></i>
<svg style="left:112px;top:4px" width="17" height="17" viewBox="0 0 17 17"><rect x="1" y="1" width="14" height="14" fill="#f6f6f6" stroke="#8a8a8a" stroke-width=".8"/><path d="M3 3 H5 M4 3 V13 M3 13 H5" stroke="#333" stroke-width="1"/><path d="M15 8 H10.5 V5 L6 9.5 L10.5 14 V11 H15 Z" fill="#f3a641" stroke="#b56d13" stroke-width=".8" stroke-linejoin="round"/></svg>
<svg style="left:136px;top:4px" width="17" height="17" viewBox="0 0 17 17"><path d="M1 1 H12 L14 3 V14 H1 Z" fill="#eef2f6" stroke="#8a8a8a" stroke-width=".8"/><path d="M3 4 H10 M3 6 H11 M3 8 H8" stroke="#8aa0b8" stroke-width=".8"/><path d="M16 10 H11.5 V7 L7 11.5 L11.5 16 V13 H16 Z" fill="#f3a641" stroke="#b56d13" stroke-width=".8" stroke-linejoin="round"/></svg>
<svg style="left:157px;top:11px" width="6" height="4" viewBox="0 0 6 4"><polygon points="0,0 5,0 2.5,3.2" fill="#444"/></svg>
<svg style="left:168px;top:4px" width="17" height="17" viewBox="0 0 17 17"><path d="M1 1 H12 L14 3 V14 H1 Z" fill="#e4e4e4" stroke="#aaa" stroke-width=".8"/><path d="M2 9 H6.5 V6 L11 10.5 L6.5 15 V12 H2 Z" fill="#c8c2b6" stroke="#a39c8e" stroke-width=".8" stroke-linejoin="round"/></svg>
<svg style="left:190px;top:11px" width="6" height="4" viewBox="0 0 6 4"><polygon points="0,0 5,0 2.5,3.2" fill="#444"/></svg>
<i class="abs" style="left:200px;top:3px;width:1px;height:19px;background:#9a9a9a"></i>
<svg style="left:206px;top:4px" width="18" height="18" viewBox="0 0 18 18"><rect x="0.5" y="0.5" width="10" height="4" fill="#f3b46a" stroke="#b8782b" stroke-width=".8"/><circle cx="9" cy="8.5" r="4.6" fill="#dcecf9" stroke="#3d4654" stroke-width="1.5"/><path d="M12.3 12 L16 16" stroke="#222" stroke-width="2.4" stroke-linecap="round"/></svg>
<svg style="left:229px;top:4px" width="18" height="18" viewBox="0 0 18 18"><rect x="3.5" y="0.5" width="11" height="4" fill="#f3b46a" stroke="#b8782b" stroke-width=".8"/><path d="M16 9 H9.5 V5.5 L2.5 11 L9.5 16.5 V13 H16 Z" fill="#7db6f0" stroke="#2b63a8" stroke-width="1" stroke-linejoin="round"/></svg>
<svg style="left:252px;top:4px" width="18" height="18" viewBox="0 0 18 18"><rect x="3.5" y="0.5" width="11" height="4" fill="#f3b46a" stroke="#b8782b" stroke-width=".8"/><path d="M2 9 H8.5 V5.5 L15.5 11 L8.5 16.5 V13 H2 Z" fill="#7db6f0" stroke="#2b63a8" stroke-width="1" stroke-linejoin="round"/></svg>
<svg style="left:275px;top:4px" width="18" height="18" viewBox="0 0 18 18"><rect x="1.5" y="0.5" width="12" height="6" fill="#f3b46a" stroke="#b8782b" stroke-width=".8"/><path d="M2 8 L3.5 11 M2 8 H13" stroke="#777" stroke-width=".8"/><rect x="4.5" y="9.5" width="12" height="6" fill="#d0d4d8" stroke="#6f767e" stroke-width=".9"/></svg>
<svg style="left:298px;top:4px" width="19" height="18" viewBox="0 0 19 18"><rect x="1.5" y="1.5" width="13" height="11" fill="none" stroke="#333" stroke-width="1" stroke-dasharray="2 1.2"/><path d="M11 8 L17.5 13 L14 13.5 L15.5 17 L13.8 17.6 L12.4 14.2 L11 16 Z" fill="#444" stroke="#222" stroke-width=".5"/></svg>
<i class="abs" style="left:322px;top:3px;width:1px;height:19px;background:#9a9a9a"></i>
<svg style="left:328px;top:3px" width="18" height="19" viewBox="0 0 18 19"><path d="M4 4.8 L7 1.6 H13 L16 4.8 L13 8 H7 Z" fill="#8fd6ea" stroke="#3f8fae" stroke-width=".9" stroke-linejoin="round"/><path d="M5.5 5 L10.6 10.2 H8 V16 H3 V10.2 H0.4 Z" fill="#f5ab45" stroke="#a8641a" stroke-width=".9" stroke-linejoin="round"/></svg>
<svg style="left:351px;top:3px" width="18" height="19" viewBox="0 0 18 19"><path d="M4 12.5 L7 9.3 H13 L16 12.5 L13 15.7 H7 Z" fill="#8fd6ea" stroke="#3f8fae" stroke-width=".9" stroke-linejoin="round"/><path d="M3 2 H8 V7.6 H10.6 L5.5 12.8 L0.4 7.6 H3 Z" fill="#f5ab45" stroke="#a8641a" stroke-width=".9" stroke-linejoin="round"/></svg>
<svg style="left:374px;top:5px" width="10" height="14" viewBox="0 0 10 14"><path d="M1 1 H9 V5 L5 10 Z" fill="#cfe4f5" stroke="#7aa3c8" stroke-width=".8"/></svg>
<svg style="left:1105px;top:7px" width="11" height="11" viewBox="0 0 11 11"><rect x="0.5" y="0.5" width="10" height="10" fill="#fff" stroke="#333" stroke-width=".8"/><path d="M5.5 0.5 V10.5 M0.5 5.5 H10.5" stroke="#333" stroke-width=".8" stroke-dasharray="1 1"/><path d="M3 5.5 H8 M5.5 3 V8" stroke="#000" stroke-width="1.6"/></svg>
</div>
<!-- ===== code area ===== -->
<div id="code" class="abs">
<div class="abs" style="left:33px;top:0;width:1px;height:790px;background:#9aa3ad;"></div>
<div class="abs" style="left:71px;top:597px;width:1019px;height:25px;background:#1e3858;"></div>
<div class="abs" style="left:951px;top:0;width:1px;height:723px;background:#233a5a;"></div>
<div class="ig" style="left:71px;top:-2px;height:25px;"></div>
<div class="ig" style="left:71px;top:223px;height:75px;"></div>
<div class="ig" style="left:71px;top:323px;height:350px;"></div>
<div class="ig" style="left:115px;top:348px;height:25px;"></div>
<div class="ig" style="left:115px;top:498px;height:175px;"></div>
<div class="ig" style="left:159px;top:523px;height:125px;"></div>
<div class="ln" style="top:0px;"><span class="t">5</span></div>
<div class="ln" style="top:25px;"><span class="t">6</span></div>
<div class="ln" style="top:50px;"><span class="t">7</span></div>
<div class="ln" style="top:75px;"><span class="t">8</span></div>
<div class="ln" style="top:100px;"><span class="t">9</span></div>
<div class="ln" style="top:125px;"><span class="t">10</span></div>
<div class="ln" style="top:150px;"><span class="t">11</span></div>
<div class="ln" style="top:175px;"><span class="t">12</span></div>
<div class="ln" style="top:200px;"><span class="t">13</span></div>
<div class="ln" style="top:225px;"><span class="t">14</span></div>
<div class="ln" style="top:250px;"><span class="t">15</span></div>
<div class="ln" style="top:275px;"><span class="t">16</span></div>
<div class="ln" style="top:300px;"><span class="t">17</span></div>
<div class="ln" style="top:350px;"><span class="t">19</span></div>
<div class="ln" style="top:375px;"><span class="t">20</span></div>
<div class="ln" style="top:400px;"><span class="t">21</span></div>
<div class="ln" style="top:425px;"><span class="t">46</span></div>
<div class="ln" style="top:450px;"><span class="t">47</span></div>
<div class="ln" style="top:475px;"><span class="t">54</span></div>
<div class="ln" style="top:500px;"><span class="t">55</span></div>
<div class="ln" style="top:525px;"><span class="t">56</span></div>
<div class="ln" style="top:575px;"><span class="t">58</span></div>
<div class="ln" style="top:625px;"><span class="t">60</span></div>
<div class="ln" style="top:650px;"><span class="t">61</span></div>
<div class="ln" style="top:675px;"><span class="t">62</span></div>
<div class="ln" style="top:700px;"><span class="t">63</span></div>
<div class="fbox" style="top:78px;"><i></i></div>
<div class="fbox" style="top:203px;"><i></i></div>
<div class="fbox" style="top:353px;"><i></i><b></b></div>
<div class="fbox" style="top:403px;"><i></i><b></b></div>
<div class="fbox" style="top:453px;"><i></i><b></b></div>
<div class="fbox" style="top:503px;"><i></i></div>
<div class="fl" style="left:52px;top:0px;width:1px;height:10px;"></div>
<div class="fl" style="left:52px;top:10px;width:7px;height:1px;"></div>
<div class="fl" style="left:52px;top:91px;width:1px;height:68px;"></div>
<div class="fl" style="left:52px;top:159px;width:7px;height:1px;"></div>
<div class="fl" style="left:52px;top:216px;width:1px;height:68px;"></div>
<div class="fl" style="left:52px;top:284px;width:7px;height:1px;"></div>
<div class="fl" style="left:52px;top:516px;width:1px;height:143px;"></div>
<div class="fl" style="left:52px;top:659px;width:7px;height:1px;"></div>
<div class="abs" style="left:214px;top:597px;width:187px;height:25px;background:#ff0000;"></div>
<div class="row" style="top:-1px;"><span class="t"><span class="c"> */</span></span></div>
<div class="row" style="top:24px;"><span class="t"><span class="k">package</span> quan.li.ngan.hang;</span></div>
<div class="row" style="top:74px;"><span class="t"><span class="k">import</span> java.text.ParseException;</span></div>
<div class="row" style="top:99px;"><span class="t"><span class="k">import</span> java.util.ArrayList;</span></div>
<div class="row" style="top:124px;"><span class="t"><span class="k">import</span> java.util.List;</span></div>
<div class="row" style="top:149px;"><span class="t"><span class="k">import</span> java.util.Scanner;</span></div>
<div class="row" style="top:199px;"><span class="t"><span class="c">/**</span></span></div>
<div class="row" style="top:224px;"><span class="t"><span class="c"> *</span></span></div>
<div class="row" style="top:249px;"><span class="t"><span class="c"> * <b>@author</b> <i>Administrator</i></span></span></div>
<div class="row" style="top:274px;"><span class="t"><span class="c"> */</span></span></div>
<div class="row" style="top:299px;"><span class="t"><span class="k">public</span> <span class="k">class</span> Bank {</span></div>
<div class="row" style="top:324px;"><span class="t">    <span class="k">private</span> List&lt;Book&gt; <span class="f">ArrBook</span>;</span></div>
<div class="row" style="top:349px;"><span class="t">     <span class="k">public</span> Bank()</span></div>
<div class="row" style="top:374px;"><span class="t">    <span class="k">public</span> <span class="k">void</span> nhap() <span class="k">throws</span> ParseException</span></div>
<div class="row" style="top:424px;"><span class="t">    <span class="k">public</span> <span class="k">void</span> xuat()</span></div>
<div class="row" style="top:474px;"><span class="t">     <span class="k">public</span> <span class="k">double</span> TongTienLai()</span></div>
<div class="row" style="top:499px;"><span class="t">     {</span></div>
<div class="row" style="top:524px;"><span class="t">         <span class="k">double</span> <span style="color:#8c8c8c">Tong</span>=<span style="color:#e6d010">0</span>;</span></div>
<div class="row" style="top:549px;"><span class="t">         <span class="k">for</span>(Book item :<span class="f">ArrBook</span>)</span></div>
<div class="row" style="top:574px;"><span class="t">         {</span></div>
<div class="row" style="top:599px;"><span class="t">             <span style="color:#fff">Tong+=(Term)item.</span></span></div>
<div class="row" style="top:624px;"><span class="t">         }</span></div>
<div class="row" style="top:649px;"><span class="t">     }</span></div>
<div class="row" style="top:674px;"><span class="t">}</span></div>
<div class="fold" style="left:269px;top:347px;width:61px;"><span class="t">{...}</span></div>
<div class="fold" style="left:115px;top:397px;width:160px;"><span class="t">{...25 lines }</span></div>
<div class="fold" style="left:115px;top:447px;width:149px;"><span class="t">{...7 lines }</span></div>
<svg style="left:324px;top:344px" width="77" height="4" viewBox="0 0 77 4"><path d="M0 2.5 L2 0.5 L4 2.5 L6 0.5 L8 2.5 L10 0.5 L12 2.5 L14 0.5 L16 2.5 L18 0.5 L20 2.5 L22 0.5 L24 2.5 L26 0.5 L28 2.5 L30 0.5 L32 2.5 L34 0.5 L36 2.5 L38 0.5 L40 2.5 L42 0.5 L44 2.5 L46 0.5 L48 2.5 L50 0.5 L52 2.5 L54 0.5 L56 2.5 L58 0.5 L60 2.5 L62 0.5 L64 2.5 L66 0.5 L68 2.5 L70 0.5 L72 2.5 L74 0.5 L76 2.5" fill="none" stroke="#e2dc00" stroke-width="1.1"/></svg>
<svg style="left:170px;top:569px" width="33" height="4" viewBox="0 0 33 4"><path d="M0 2.5 L2 0.5 L4 2.5 L6 0.5 L8 2.5 L10 0.5 L12 2.5 L14 0.5 L16 2.5 L18 0.5 L20 2.5 L22 0.5 L24 2.5 L26 0.5 L28 2.5 L30 0.5 L32 2.5" fill="none" stroke="#e2dc00" stroke-width="1.1"/></svg>
<div class="abs" style="left:400px;top:597px;width:2px;height:25px;background:#f2d40a;"></div>
<svg style="left:21px;top:329px" width="14" height="14" viewBox="0 0 14 14"><defs><radialGradient id="bg13" cx="45%" cy="35%" r="65%"><stop offset="0" stop-color="#fff6b8"/><stop offset=".55" stop-color="#f2cf2a"/><stop offset="1" stop-color="#b88a00"/></radialGradient></defs><path d="M5.7 0.9 C3 0.9 1.3 2.9 1.4 5 C1.5 6.9 3.2 7.6 3.7 9.4 H7.7 C8.2 7.6 9.9 6.9 10 5 C10.1 2.9 8.4 0.9 5.7 0.9 Z" fill="url(#bg13)"/><path d="M4.4 4.2 L5.7 8 L7 4.2" fill="none" stroke="#fff8c8" stroke-width=".7" opacity=".8"/><rect x="4" y="9.6" width="3.4" height="2.8" fill="#e8e8ee" stroke="#8a8a92" stroke-width=".5"/><path d="M9.7 6.3 L13 12.7 H6.4 Z" fill="#f7d61c" stroke="#c9a200" stroke-width=".7" stroke-linejoin="round"/><path d="M9.7 8.4 V10.6 M9.7 11.3 V12" stroke="#222" stroke-width="1.1"/></svg>
<svg style="left:21px;top:554px" width="14" height="14" viewBox="0 0 14 14"><defs><radialGradient id="bg22" cx="45%" cy="35%" r="65%"><stop offset="0" stop-color="#fff6b8"/><stop offset=".55" stop-color="#f2cf2a"/><stop offset="1" stop-color="#b88a00"/></radialGradient></defs><path d="M5.7 0.9 C3 0.9 1.3 2.9 1.4 5 C1.5 6.9 3.2 7.6 3.7 9.4 H7.7 C8.2 7.6 9.9 6.9 10 5 C10.1 2.9 8.4 0.9 5.7 0.9 Z" fill="url(#bg22)"/><path d="M4.4 4.2 L5.7 8 L7 4.2" fill="none" stroke="#fff8c8" stroke-width=".7" opacity=".8"/><rect x="4" y="9.6" width="3.4" height="2.8" fill="#e8e8ee" stroke="#8a8a92" stroke-width=".5"/><path d="M9.7 6.3 L13 12.7 H6.4 Z" fill="#f7d61c" stroke="#c9a200" stroke-width=".7" stroke-linejoin="round"/><path d="M9.7 8.4 V10.6 M9.7 11.3 V12" stroke="#222" stroke-width="1.1"/></svg>
<svg style="left:22px;top:605px" width="11" height="11" viewBox="0 0 11 11"><path d="M3.3 0.3 H7.7 L10.7 3.3 V7.7 L7.7 10.7 H3.3 L0.3 7.7 V3.3 Z" fill="#d8242a" stroke="#b01c22" stroke-width=".6"/><path d="M3.5 1.2 H7.5 L9.8 3.5 V5 H1.2 V3.5 Z" fill="#ef5a5e" opacity=".55"/><path d="M5.5 2.2 V6.4" stroke="#fff" stroke-width="1.5" stroke-linecap="round"/><circle cx="5.5" cy="8.3" r=".9" fill="#fff"/></svg>
<div class="abs ann" style="left:431px;top:617px;letter-spacing:-0.3px;">Dù đã ép kiểu về class con</div>
<div class="abs ann" style="left:431px;top:636px;letter-spacing:-0.06px;">nhưng vẫn không tìm ra</div>
<div class="abs ann" style="left:431px;top:655px;letter-spacing:0.12px;">Method Tinhlai()...</div>
<div class="abs ann" style="left:433px;top:694px;letter-spacing:0px;">Trong c# thì  dùng toán tử <span style="color:#2db84d">is</span>  bên đây</div>
<div class="abs ann" style="left:433px;top:713px;letter-spacing:-0.23px;">không dùng được.</div>
</div>
<div class="abs" style="left:156px;top:922px;width:1090px;height:17px;background:#121e31;"></div>
<div class="abs" style="left:227px;top:922px;width:1019px;height:17px;background:#f0f0f0;border-bottom:1px solid #c8c8c8;">
<svg style="left:5px;top:5px" width="5" height="8" viewBox="0 0 5 8"><polygon points="4,0 4,7 0,3.5" fill="#333"/></svg>
<svg style="left:1007px;top:5px" width="5" height="8" viewBox="0 0 5 8"><polygon points="0,0 0,7 4,3.5" fill="#333"/></svg>
<div class="abs" style="left:17px;top:1px;width:652px;height:15px;border:1px solid #9a9a9a;border-radius:2px;background:linear-gradient(180deg,#f6f6f6 0,#e8e8e8 45%,#d6d6d6 50%,#cfcfcf 100%);"><i class="abs" style="left:322px;top:4px;width:1px;height:6px;background:#555"></i><i class="abs" style="left:324px;top:4px;width:1px;height:6px;background:#555"></i><i class="abs" style="left:326px;top:4px;width:1px;height:6px;background:#555"></i></div>
</div>
<div class="abs" style="left:1246px;top:132px;width:17px;height:790px;background:#f0f0f0;">
<svg style="left:5px;top:7px" width="8" height="5" viewBox="0 0 8 5"><polygon points="0,4.5 7,4.5 3.5,0.5" fill="#333"/></svg>
<svg style="left:5px;top:779px" width="8" height="5" viewBox="0 0 8 5"><polygon points="0,0.5 7,0.5 3.5,4.5" fill="#333"/></svg>
<div class="abs" style="left:1px;top:91px;width:15px;height:542px;border:1px solid #9a9a9a;border-radius:2px;background:linear-gradient(90deg,#f6f6f6 0,#e8e8e8 45%,#d6d6d6 50%,#cfcfcf 100%);"><i class="abs" style="left:4px;top:268px;width:6px;height:1px;background:#555"></i><i class="abs" style="left:4px;top:270px;width:6px;height:1px;background:#555"></i><i class="abs" style="left:4px;top:272px;width:6px;height:1px;background:#555"></i></div>
</div>
<div class="abs" style="left:1263px;top:132px;width:13px;height:808px;background:#f0f0f0;border-left:1px solid #e0e0e0;">
<i class="abs" style="left:1px;top:8px;width:8px;height:8px;background:#f0261a"></i>
<i class="abs" style="left:1px;top:312px;width:10px;height:2px;background:#f5b81a"></i>
<i class="abs" style="left:1px;top:400px;width:10px;height:2px;background:#f5b81a"></i>
<i class="abs" style="left:1px;top:468px;width:10px;height:2px;background:#f5b81a"></i>
<i class="abs" style="left:1px;top:500px;width:10px;height:2px;background:#d23a3a"></i>
</div>
<div class="abs" style="left:1275px;top:86px;width:1px;height:874px;background:#8b97a5;"></div>
<div class="abs ui" style="left:155px;top:939px;width:1121px;height:21px;background:#f0f0f0;border:1px solid #8b97a5;border-top:none;">
<svg style="left:9px;top:3px" width="17" height="17" viewBox="0 0 14 14"><path d="M1 8 L6 2 L11 6 L6 12 Z" fill="#f5d9a0" stroke="#8a6a2a" stroke-width=".8"/><rect x="1" y="8" width="6" height="5" fill="#9cc3ea" stroke="#4a7fb5" stroke-width=".7"/><circle cx="9.5" cy="10" r="3.2" fill="#f4a3a6" stroke="#cf6b70" stroke-width=".8"/></svg>
<span class="abs" style="left:30px;top:4px;letter-spacing:-0.03px;">quan.li.ngan.hang.Bank</span>
<svg style="left:151px;top:4px" width="9" height="14" viewBox="0 0 9 14"><path d="M1 1 L7 7 L1 13 M3.5 1 L9.5 7 L3.5 13" fill="none" stroke="#555" stroke-width="1"/></svg>
<span class="mi" style="left:177px;top:6px;"></span>
<span class="abs" style="left:192px;top:4px;letter-spacing:-0.2px;">TongTienLai</span>
<svg style="left:256px;top:4px" width="9" height="14" viewBox="0 0 9 14"><path d="M1 1 L7 7 L1 13 M3.5 1 L9.5 7 L3.5 13" fill="none" stroke="#555" stroke-width="1"/></svg>
<span class="abs" style="left:276px;top:4px;letter-spacing:-0.08px;">for <span style="position:static;color:#777">(Book item : ArrBook)</span></span>
<svg style="left:402px;top:4px" width="9" height="14" viewBox="0 0 9 14"><path d="M1 1 L7 7 L1 13 M3.5 1 L9.5 7 L3.5 13" fill="none" stroke="#555" stroke-width="1"/></svg>
<svg style="left:1108px;top:7px" width="8" height="8" viewBox="0 0 8 8"><path d="M2.6 2.6 L5.4 5.4 M5.4 2.6 L2.6 5.4" stroke="#444" stroke-width="1.1"/><circle cx="1.8" cy="1.8" r="1.25" fill="none" stroke="#444" stroke-width=".8"/><circle cx="6.2" cy="1.8" r="1.25" fill="none" stroke="#444" stroke-width=".8"/><circle cx="1.8" cy="6.2" r="1.25" fill="none" stroke="#444" stroke-width=".8"/><circle cx="6.2" cy="6.2" r="1.25" fill="none" stroke="#444" stroke-width=".8"/></svg>
</div>
<!-- ===== javadoc popup ===== -->
<div id="jdoc" class="abs">
<div class="bar abs">
<svg style="left:3px;top:2px" width="16" height="16" viewBox="0 0 16 16"><path d="M15.6 5 H8.2 V0.6 L0.2 7.8 L8.2 15 V10.6 H15.6 Z" fill="#a4a4a4"/></svg>
<svg style="left:23px;top:2px" width="16" height="16" viewBox="0 0 16 16"><path d="M0.4 5 H7.8 V0.6 L15.8 7.8 L7.8 15 V10.6 H0.4 Z" fill="#a4a4a4"/></svg>
<svg style="left:42px;top:2px" width="17" height="16" viewBox="0 0 17 16"><rect x="2" y="0.5" width="14" height="12.5" fill="#b2b2b2"/><rect x="2" y="0.5" width="14" height="3" fill="#a2a2a2"/><circle cx="5" cy="11" r="4.4" fill="#9e9e9e" stroke="#c4c4c4" stroke-width=".6"/><polygon points="2.6,9.8 7.4,9.8 5,13.2" fill="#b6b6b6"/></svg>
<svg style="left:62px;top:2px" width="17" height="17" viewBox="0 0 17 17"><rect x="4.5" y="0.5" width="11.5" height="9.5" fill="#e9f0f8" stroke="#7f97b5" stroke-width=".9"/><rect x="4.5" y="0.5" width="11.5" height="2.6" fill="#9db8d8"/><rect x="0.5" y="4" width="12" height="12" fill="#f4f7fb" stroke="#7f97b5" stroke-width=".9"/><path d="M7 5.5 H12.5 V9" stroke="#c9d6e6" stroke-width=".8" fill="none"/><path d="M2.2 13.2 L6.4 9 L4.8 7.4 H9.8 V12.4 L8.2 10.8 L4 15 Z" fill="#f0a64a" stroke="#a8641a" stroke-width=".7" stroke-linejoin="round"/></svg>
</div>
<div class="abs" style="left:3px;top:21px;font:bold 19.2px/26px 'Liberation Sans',sans-serif;color:#0000ff;text-decoration:underline;text-decoration-thickness:1px;text-underline-offset:1px;text-decoration-skip-ink:none;white-space:nowrap;">quan.li.ngan.hang.Book</div>
<div class="abs" style="left:3px;top:51px;height:25px;color:#000;"><span class="t">protected double <b>deposits</b></span></div>
<div class="abs" style="left:3px;top:95px;width:494px;font:18px/22px 'Liberation Sans',sans-serif;letter-spacing:-0.03px;color:#000;white-space:pre;"><span style="color:#800000">Javadoc not found.</span> Either Javadoc documentation for this
item does not exist or you have not added specified Javadoc
in the Java Platform Manager or the Library Manager.</div>
</div>
<!-- ===== code completion popup ===== -->
<div id="cc" class="abs">
<div class="r g" style="top:0px;background:#3399ff;color:#fff;"><svg style="left:1px;top:4px" width="17" height="17" viewBox="0 0 17 17"><rect x="6" y="4.7" width="10.3" height="10.3" fill="#3e4c5a" opacity=".35"/><rect x="5.8" y="4.7" width="9.6" height="9.8" fill="#a9cbea" stroke="#47586a" stroke-width="1"/><rect x="6.6" y="5.4" width="8" height="3.2" fill="#c4dcf2"/><rect x="6.6" y="11.6" width="8" height="2.2" fill="#bcd8f0"/><circle cx="3.6" cy="2.9" r="2.5" fill="#fff" stroke="#5a5a5a" stroke-width="1.1"/><ellipse cx="3.6" cy="2.6" rx="1.1" ry=".7" fill="#6a6a6a"/><path d="M3.6 5.2 V10.6" stroke="#5a5a5a" stroke-width="2.6"/><path d="M3.6 5 V10.2" stroke="#fff" stroke-width="1.1"/><path d="M4 8.6 H6" stroke="#5a5a5a" stroke-width="1.8"/><path d="M3.8 8.6 H5.4" stroke="#fff" stroke-width=".7"/></svg><span class="n t"><span class="fi" style=color:#fff>deposits</span></span><span class="ty t">double</span></div>
<div class="r" style="top:25px;"><svg style="left:1px;top:4px" width="17" height="17" viewBox="0 0 17 17"><rect x="6" y="4.7" width="10.3" height="10.3" fill="#3e4c5a" opacity=".35"/><rect x="5.8" y="4.7" width="9.6" height="9.8" fill="#a9cbea" stroke="#47586a" stroke-width="1"/><rect x="6.6" y="5.4" width="8" height="3.2" fill="#c4dcf2"/><rect x="6.6" y="11.6" width="8" height="2.2" fill="#bcd8f0"/><circle cx="3.6" cy="2.9" r="2.5" fill="#fff" stroke="#5a5a5a" stroke-width="1.1"/><ellipse cx="3.6" cy="2.6" rx="1.1" ry=".7" fill="#6a6a6a"/><path d="M3.6 5.2 V10.6" stroke="#5a5a5a" stroke-width="2.6"/><path d="M3.6 5 V10.2" stroke="#fff" stroke-width="1.1"/><path d="M4 8.6 H6" stroke="#5a5a5a" stroke-width="1.8"/><path d="M3.8 8.6 H5.4" stroke="#fff" stroke-width=".7"/></svg><span class="n t"><span class="fi">interest_rate</span></span><span class="ty t">double</span></div>
<div class="r g" style="top:50px;"><span class="mi"></span><span class="n t"><b>getDeposits</b>()</span><span class="ty t">double</span></div>
<div class="r" style="top:75px;"><span class="mi"></span><span class="n t"><b>getInterest_rate</b>()</span><span class="ty t">double</span></div>
<div class="r g" style="top:100px;"><span class="mi"></span><span class="n t">hashCode()</span><span class="ty t">int</span></div>
<div class="r" style="top:125px;"><svg style="left:1px;top:4px" width="17" height="17" viewBox="0 0 17 17"><rect x="6" y="4.7" width="10.3" height="10.3" fill="#3e4c5a" opacity=".35"/><rect x="5.8" y="4.7" width="9.6" height="9.8" fill="#a9cbea" stroke="#47586a" stroke-width="1"/><rect x="6.6" y="5.4" width="8" height="3.2" fill="#c4dcf2"/><rect x="6.6" y="11.6" width="8" height="2.2" fill="#bcd8f0"/><circle cx="3.6" cy="2.9" r="2.5" fill="#fff" stroke="#5a5a5a" stroke-width="1.1"/><ellipse cx="3.6" cy="2.6" rx="1.1" ry=".7" fill="#6a6a6a"/><path d="M3.6 5.2 V10.6" stroke="#5a5a5a" stroke-width="2.6"/><path d="M3.6 5 V10.2" stroke="#fff" stroke-width="1.1"/><path d="M4 8.6 H6" stroke="#5a5a5a" stroke-width="1.8"/><path d="M3.8 8.6 H5.4" stroke="#fff" stroke-width=".7"/></svg><span class="n t"><span class="fi">CMND</span></span><span class="ty t">String</span></div>
<div class="r g" style="top:150px;"><svg style="left:1px;top:4px" width="17" height="17" viewBox="0 0 17 17"><rect x="6" y="4.7" width="10.3" height="10.3" fill="#3e4c5a" opacity=".35"/><rect x="5.8" y="4.7" width="9.6" height="9.8" fill="#a9cbea" stroke="#47586a" stroke-width="1"/><rect x="6.6" y="5.4" width="8" height="3.2" fill="#c4dcf2"/><rect x="6.6" y="11.6" width="8" height="2.2" fill="#bcd8f0"/><circle cx="3.6" cy="2.9" r="2.5" fill="#fff" stroke="#5a5a5a" stroke-width="1.1"/><ellipse cx="3.6" cy="2.6" rx="1.1" ry=".7" fill="#6a6a6a"/><path d="M3.6 5.2 V10.6" stroke="#5a5a5a" stroke-width="2.6"/><path d="M3.6 5 V10.2" stroke="#fff" stroke-width="1.1"/><path d="M4 8.6 H6" stroke="#5a5a5a" stroke-width="1.8"/><path d="M3.8 8.6 H5.4" stroke="#fff" stroke-width=".7"/></svg><span class="n t"><span class="fi">DayCreateBook</span></span><span class="ty t">Date</span></div>
<div class="r" style="top:175px;"><svg style="left:1px;top:4px" width="17" height="17" viewBox="0 0 17 17"><rect x="6" y="4.7" width="10.3" height="10.3" fill="#3e4c5a" opacity=".35"/><rect x="5.8" y="4.7" width="9.6" height="9.8" fill="#a9cbea" stroke="#47586a" stroke-width="1"/><rect x="6.6" y="5.4" width="8" height="3.2" fill="#c4dcf2"/><rect x="6.6" y="11.6" width="8" height="2.2" fill="#bcd8f0"/><circle cx="3.6" cy="2.9" r="2.5" fill="#fff" stroke="#5a5a5a" stroke-width="1.1"/><ellipse cx="3.6" cy="2.6" rx="1.1" ry=".7" fill="#6a6a6a"/><path d="M3.6 5.2 V10.6" stroke="#5a5a5a" stroke-width="2.6"/><path d="M3.6 5 V10.2" stroke="#fff" stroke-width="1.1"/><path d="M4 8.6 H6" stroke="#5a5a5a" stroke-width="1.8"/><path d="M3.8 8.6 H5.4" stroke="#fff" stroke-width=".7"/></svg><span class="n t"><span class="fi">Name</span></span><span class="ty t">String</span></div>
<div class="r g" style="top:200px;"><span class="mi"></span><span class="n t"><b>Export</b>()</span><span class="ty t">void</span></div>
<div class="r" style="top:225px;"><span class="mi"></span><span class="n t"><b>Input</b>()</span><span class="ty t">void</span></div>
<div class="r g" style="top:250px;"><span class="mi"></span><span class="n t">equals(Object <span style="color:#b8862b">obj</span>)</span><span class="ty t">boolean</span></div>
<div class="r" style="top:275px;"><span class="mi"></span><span class="n t"><b>getCMND</b>()</span><span class="ty t">String</span></div>
<div class="r g" style="top:300px;"><span class="mi"></span><span class="n t">getClass()</span><span class="ty t">Class&lt;?&gt;</span></div>
<div class="r" style="top:325px;"><span class="mi"></span><span class="n t"><b>getDayCreateBook</b>()</span><span class="ty t">Date</span></div>
<div class="r g" style="top:350px;"><span class="mi"></span><span class="n t"><b>getName</b>()</span><span class="ty t">String</span></div>
<div class="r" style="top:375px;"><span class="mi"></span><span class="n t">notify()</span><span class="ty t">void</span></div>
<div class="r g" style="top:400px;"><span class="mi"></span><span class="n t">notifyAll()</span><span class="ty t">void</span></div>
<div class="abs" style="left:0;top:124px;width:491px;height:1px;background:#6e6e6e;"></div>
<div class="abs" style="left:491px;top:0;width:17px;height:425px;background:#f0f0f0;">
<svg style="left:6px;top:7px" width="8" height="5" viewBox="0 0 8 5"><polygon points="0,4.5 7,4.5 3.5,0.5" fill="#333"/></svg>
<svg style="left:6px;top:414px" width="8" height="5" viewBox="0 0 8 5"><polygon points="0,0.5 7,0.5 3.5,4.5" fill="#333"/></svg>
<div class="abs" style="left:1px;top:18px;width:15px;height:254px;border:1px solid #9a9a9a;border-radius:2px;background:linear-gradient(90deg,#f6f6f6 0,#e8e8e8 45%,#d6d6d6 50%,#cfcfcf 100%);"><i class="abs" style="left:4px;top:123px;width:6px;height:1px;background:#555"></i><i class="abs" style="left:4px;top:125px;width:6px;height:1px;background:#555"></i><i class="abs" style="left:4px;top:127px;width:6px;height:1px;background:#555"></i></div>
</div>
</div>
<!-- ===== status bar ===== -->
<div id="statusbar" class="abs">
<svg style="left:5px;top:5px" width="13" height="12" viewBox="0 0 13 12"><rect x="4" y="1" width="8" height="6" fill="#f0f0f0" stroke="#222" stroke-width="1.2"/><rect x="1" y="4.5" width="8" height="6" fill="#f0f0f0" stroke="#222" stroke-width="1.2"/></svg>
<div class="abs" style="left:25px;top:3px;width:16px;height:16px;border:1px solid #6a6a6a;border-radius:2px;background:#2a2e2a;box-shadow:inset 0 0 0 1px #cfcfcf;"><svg style="left:3px;top:4px" width="9" height="7" viewBox="0 0 9 7"><path d="M0.5 0.8 L3 3 L0.5 5.2" fill="none" stroke="#7fe07f" stroke-width="1.1"/><path d="M4 5.6 H8" stroke="#eee" stroke-width="1.1"/></svg></div>
<span class="abs ui" style="left:44px;top:5px;">Terminal</span>
<div class="abs" style="left:1134px;top:-10px;width:87px;height:42px;background:linear-gradient(180deg,#fff 0,#fff 40%,#e6e8f4 100%);border:1px solid #767676;border-radius:3px;box-shadow:1px 1px 2px rgba(0,0,0,.25);"><span class="abs" style="left:4px;top:2px;font-size:12px;color:#4c4c4c;white-space:pre;letter-spacing:-0.1px;">Network  2</span><span class="abs" style="left:4px;top:17px;font-size:11.5px;font-style:italic;color:#4c4c4c;white-space:nowrap;letter-spacing:-0.1px;">Internet access</span></div>
<i class="abs" style="left:1253px;top:5px;width:1px;height:14px;background:#b0b0b0"></i>
<span class="abs ui" style="left:1258px;top:7px;font-size:10.5px;">INS</span>
</div>
<!-- ===== windows taskbar ===== -->
<div id="taskbar" class="abs"><div class="sh abs"></div>
<div class="abs" style="left:985px;top:-6px;width:7px;height:56px;background:linear-gradient(90deg,rgba(255,255,255,0),rgba(255,255,255,.45),rgba(255,255,255,0));transform:skewX(40deg);transform-origin:0 0;"></div><div class="abs" style="left:940px;top:-6px;width:60px;height:56px;background:linear-gradient(90deg,rgba(255,255,255,0),rgba(255,255,255,.10));transform:skewX(40deg);transform-origin:0 0;"></div>
<svg style="left:8px;top:0px" width="38" height="39" viewBox="0 0 38 39"><defs><linearGradient id="orbT" x1="0" y1="0" x2="0" y2="1"><stop offset="0" stop-color="#dfe8ee"/><stop offset="1" stop-color="#6f93ad"/></linearGradient><radialGradient id="orbB" cx="50%" cy="100%" r="70%"><stop offset="0" stop-color="#1fe0ff"/><stop offset=".45" stop-color="#1488c8"/><stop offset="1" stop-color="#0c4f8c"/></radialGradient><clipPath id="orbC"><circle cx="19" cy="19.5" r="17.4"/></clipPath></defs><circle cx="19" cy="19.5" r="18.6" fill="#13335c" stroke="#7fb6da" stroke-width=".8"/><g clip-path="url(#orbC)"><rect x="0" y="0" width="38" height="39" fill="url(#orbB)"/><path d="M0 0 H38 V17 C30 22 8 22 0 17 Z" fill="url(#orbT)"/></g><path d="M11.5 9.6 C14.2 7.8 17.4 7.6 20.2 9 L18.4 17.6 C15.6 16.4 12.8 16.6 9.6 18.2 Z" fill="#ee5a22"/><path d="M21.4 9.6 C24.6 11 28 10.8 31 9.2 L29 18.4 C26 20 22.6 19.8 19.4 18.4 Z" fill="#86c440"/><path d="M9.2 19.6 C12.4 18 15.2 17.9 18 19.2 L16.2 27.6 C13.4 26.4 10.6 26.6 7.2 28.2 Z" fill="#2a9ae6"/><path d="M19.2 19.8 C22.4 21.2 25.6 21.3 28.6 19.8 L26.8 28.6 C23.8 30.2 20.4 30 17.2 28.4 Z" fill="#fbc62c"/><path d="M12 10 C14.4 8.6 17 8.4 19.4 9.4 L18.8 12 C16.4 11 13.8 11.4 11.4 12.6 Z" fill="#fff" opacity=".25"/></svg>
<svg style="left:75px;top:7px" width="28" height="30" viewBox="0 0 28 30"><rect x="4" y="3" width="22" height="22" fill="#8fc0e8" stroke="#5f95c8" stroke-width="1"/><rect x="1" y="1" width="22" height="22" fill="#b8d8f2" stroke="#6fa3d4" stroke-width="1"/><circle cx="12" cy="12.5" r="9.5" fill="#f58a1f" stroke="#fde0b8" stroke-width="1.2"/><path d="M9 7 L17.5 12.5 L9 18 Z" fill="#fff"/></svg>
<svg style="left:134px;top:4px" width="34" height="32" viewBox="0 0 34 32"><path d="M2 6 H12 L14 9 H31 V26 H2 Z" fill="#f4d77e" stroke="#c9a544" stroke-width="1"/><rect x="5" y="3" width="3" height="2" fill="#3fae3f"/><rect x="14" y="5" width="3" height="2" fill="#d83a3a"/><rect x="21" y="6.5" width="3" height="2" fill="#3a8ad8"/><path d="M2 11 H31 V27 H2 Z" fill="#f8e39a" stroke="#c9a544" stroke-width="1"/><path d="M7 19 H26 V30 H21 V24 H12 V30 H7 Z" fill="#a9d3f2" stroke="#e9f5fd" stroke-width="1.2"/></svg>
<svg style="left:196px;top:2px" width="34" height="36" viewBox="0 0 34 36"><rect x="3.5" y="4.5" width="20" height="24" fill="none" stroke="#7fbf2a" stroke-width="1.6" stroke-dasharray="2 2"/><path d="M2 3 C2 0.5 12 0.5 12 3 V13 C12 15.5 2 15.5 2 13 Z" fill="#f2c12e" stroke="#b98a12" stroke-width=".8"/><ellipse cx="7" cy="3" rx="5" ry="1.8" fill="#fbe08a" stroke="#b98a12" stroke-width=".6"/><path d="M14 30 L27 16 L30 19 L17 33 Z" fill="#e9a73a" stroke="#8a5a12" stroke-width=".8"/><path d="M22 14 C24 11 29 11 31 14 L33 18 L30 19 L27 16 L24 17 Z" fill="#d8dde2" stroke="#6e7a86" stroke-width=".8"/><path d="M12 16 L16 14 L29 30 L26 33 L14 20 Z" fill="#c8ced4" stroke="#5e6a76" stroke-width=".8"/></svg>
<svg style="left:258px;top:3px" width="34" height="34" viewBox="0 0 34 34"><path d="M24 1 L32 4.5 V29.5 L24 33 L9 28 L24 29 Z" fill="#8a5bc9"/><path d="M24 1 V33" stroke="#7a4cb8" stroke-width="1"/><path d="M23 7 L9.5 17 L23 27 V21.5 L17 17 L23 12.5 Z" fill="#9a6ad6"/><path d="M2 11 L5 9.5 L13 17 L5 24.5 L2 23 L8 17 Z" fill="#9a6ad6"/></svg>
<div class="tbtn abs" style="left:307px;"></div><div class="tbtn abs" style="left:369px;"></div>
<div class="tbtn abs" style="left:431px;width:60px;background:linear-gradient(180deg,rgba(255,255,255,.70) 0,rgba(255,255,255,.58) 45%,rgba(255,255,255,.40) 50%,rgba(255,255,255,.46) 100%);box-shadow:inset 0 0 0 1px rgba(255,255,255,.8);"></div>
<svg style="left:320px;top:2px" width="34" height="34" viewBox="0 0 34 34"><circle cx="17" cy="18" r="15.4" fill="#5db04a" stroke="#eaf6e4" stroke-width=".8"/><path d="M17 18 L14.5 2 L32 2 L33 13 Z" fill="#fff"/><path d="M22.5 9.5 L25.5 3.2 L31.2 3.2 L26 11.8 Z" fill="#5db04a"/><path d="M18.6 10 L19.6 3.4 L22 3.8 L21 10.6 Z" fill="#f47a1f"/><path d="M24.4 13.6 L30.2 10 L31.4 12.2 L25.6 15.6 Z" fill="#f47a1f"/><path d="M21.8 11.4 L25 7.2 L26.4 8.2 L23.2 12.6 Z" fill="#f47a1f" opacity="0"/><circle cx="16.6" cy="18.6" r="6.6" fill="#fff"/><circle cx="16.6" cy="18.6" r="3.9" fill="#5db04a"/></svg>
<svg style="left:382px;top:2px" width="34" height="34" viewBox="0 0 34 34"><defs><linearGradient id="wdg" x1="0" y1="0" x2="1" y2="1"><stop offset="0" stop-color="#4f93dc"/><stop offset=".55" stop-color="#9cc4ee"/><stop offset="1" stop-color="#ffffff"/></linearGradient></defs><path d="M1.5 8 C1.5 4 4 1.5 8 1.5 H30 V30 H1.5 Z" fill="#fff" stroke="#b4c8e4" stroke-width="1"/><path d="M2 8 C2 4.4 4.4 2 8 2 H29.5 V16 L2 24 Z" fill="url(#wdg)"/><path d="M30 2 V30" stroke="#2f5fa8" stroke-width="1"/><path d="M4 25 L27 19 M4 28 L27 22.5" stroke="#c6d6ec" stroke-width="1"/><path d="M19 21 L31 17 L33 26 L22 29.5 Z" fill="#fbfcfe" stroke="#a9b9d2" stroke-width=".8"/><text x="4.6" y="21" font-family="Liberation Sans,sans-serif" font-weight="bold" font-size="20" fill="#1b58b4" stroke="#fff" stroke-width=".9" paint-order="stroke" textLength="22" lengthAdjust="spacingAndGlyphs">W</text></svg>
<svg style="left:446px;top:2px" width="30" height="34" viewBox="0 0 30 34"><polygon points="15,1.5 28.6,9.3 28.6,24.7 15,32.5 1.4,24.7 1.4,9.3" fill="#fff"/><polygon points="15,1.5 28.6,9.3 22,13.2 15,9.2 8,13.2 1.4,9.3" fill="#a9c24a"/><polygon points="1.4,9.3 8,13.2 8,21 1.4,24.7" fill="#a52c4c"/><polygon points="1.4,24.7 8,21 15,25 15,32.5" fill="#d9415f"/><polygon points="28.6,9.3 22,13.2 22,21 28.6,24.7" fill="#3a6fc8"/><polygon points="28.6,24.7 22,21 15,25 15,32.5" fill="#4b95e2"/><polygon points="15,9.2 22,13.2 15,17.2 8,13.2" fill="#eef2e2"/><polygon points="8,13.2 15,17.2 15,25 8,21" fill="#ffffff"/><polygon points="22,13.2 15,17.2 15,25 22,21" fill="#dde3ea"/></svg>
<span class="tray abs" style="left:1086px;top:10px;font-size:11.5px;">EN</span>
<svg style="left:1117px;top:17px" width="9" height="6" viewBox="0 0 9 6"><polygon points="0.5,5 8.5,5 4.5,0.5" fill="#fff"/></svg>
<svg style="left:1138px;top:12px" width="17" height="16" viewBox="0 0 17 16"><rect x="5.5" y="2.5" width="9" height="7" fill="#2a5f9a" stroke="#fff" stroke-width="1.2"/><path d="M8 12.5 H13 M10.5 9.5 V12.5" stroke="#fff" stroke-width="1.3"/><path d="M2.5 1 V12 M0.8 3 H4.2 M0.8 5.5 H4.2" stroke="#fff" stroke-width="1.2"/></svg>
<svg style="left:1161px;top:12px" width="16" height="15" viewBox="0 0 16 15"><path d="M1 5 H4 L8 1.5 V13.5 L4 10 H1 Z" fill="#fff"/><path d="M10 4.5 C11.5 6 11.5 9 10 10.5 M12 2.5 C14.6 5 14.6 10 12 12.5" fill="none" stroke="#fff" stroke-width="1.1"/></svg>
<span class="tray abs" style="left:1200px;top:5px;letter-spacing:-0.3px;">20:35 PM</span>
<span class="tray abs" style="left:1195px;top:21px;letter-spacing:-0.3px;">02/04/2019</span>
<div class="abs" style="left:1265px;top:0;width:15px;height:39px;border-left:1px solid rgba(10,30,60,.7);background:linear-gradient(180deg,rgba(255,255,255,.35),rgba(255,255,255,.12) 50%,rgba(255,255,255,.2));box-shadow:inset 1px 0 0 rgba(255,255,255,.5);"></div>
</div>
</body>
</html>
